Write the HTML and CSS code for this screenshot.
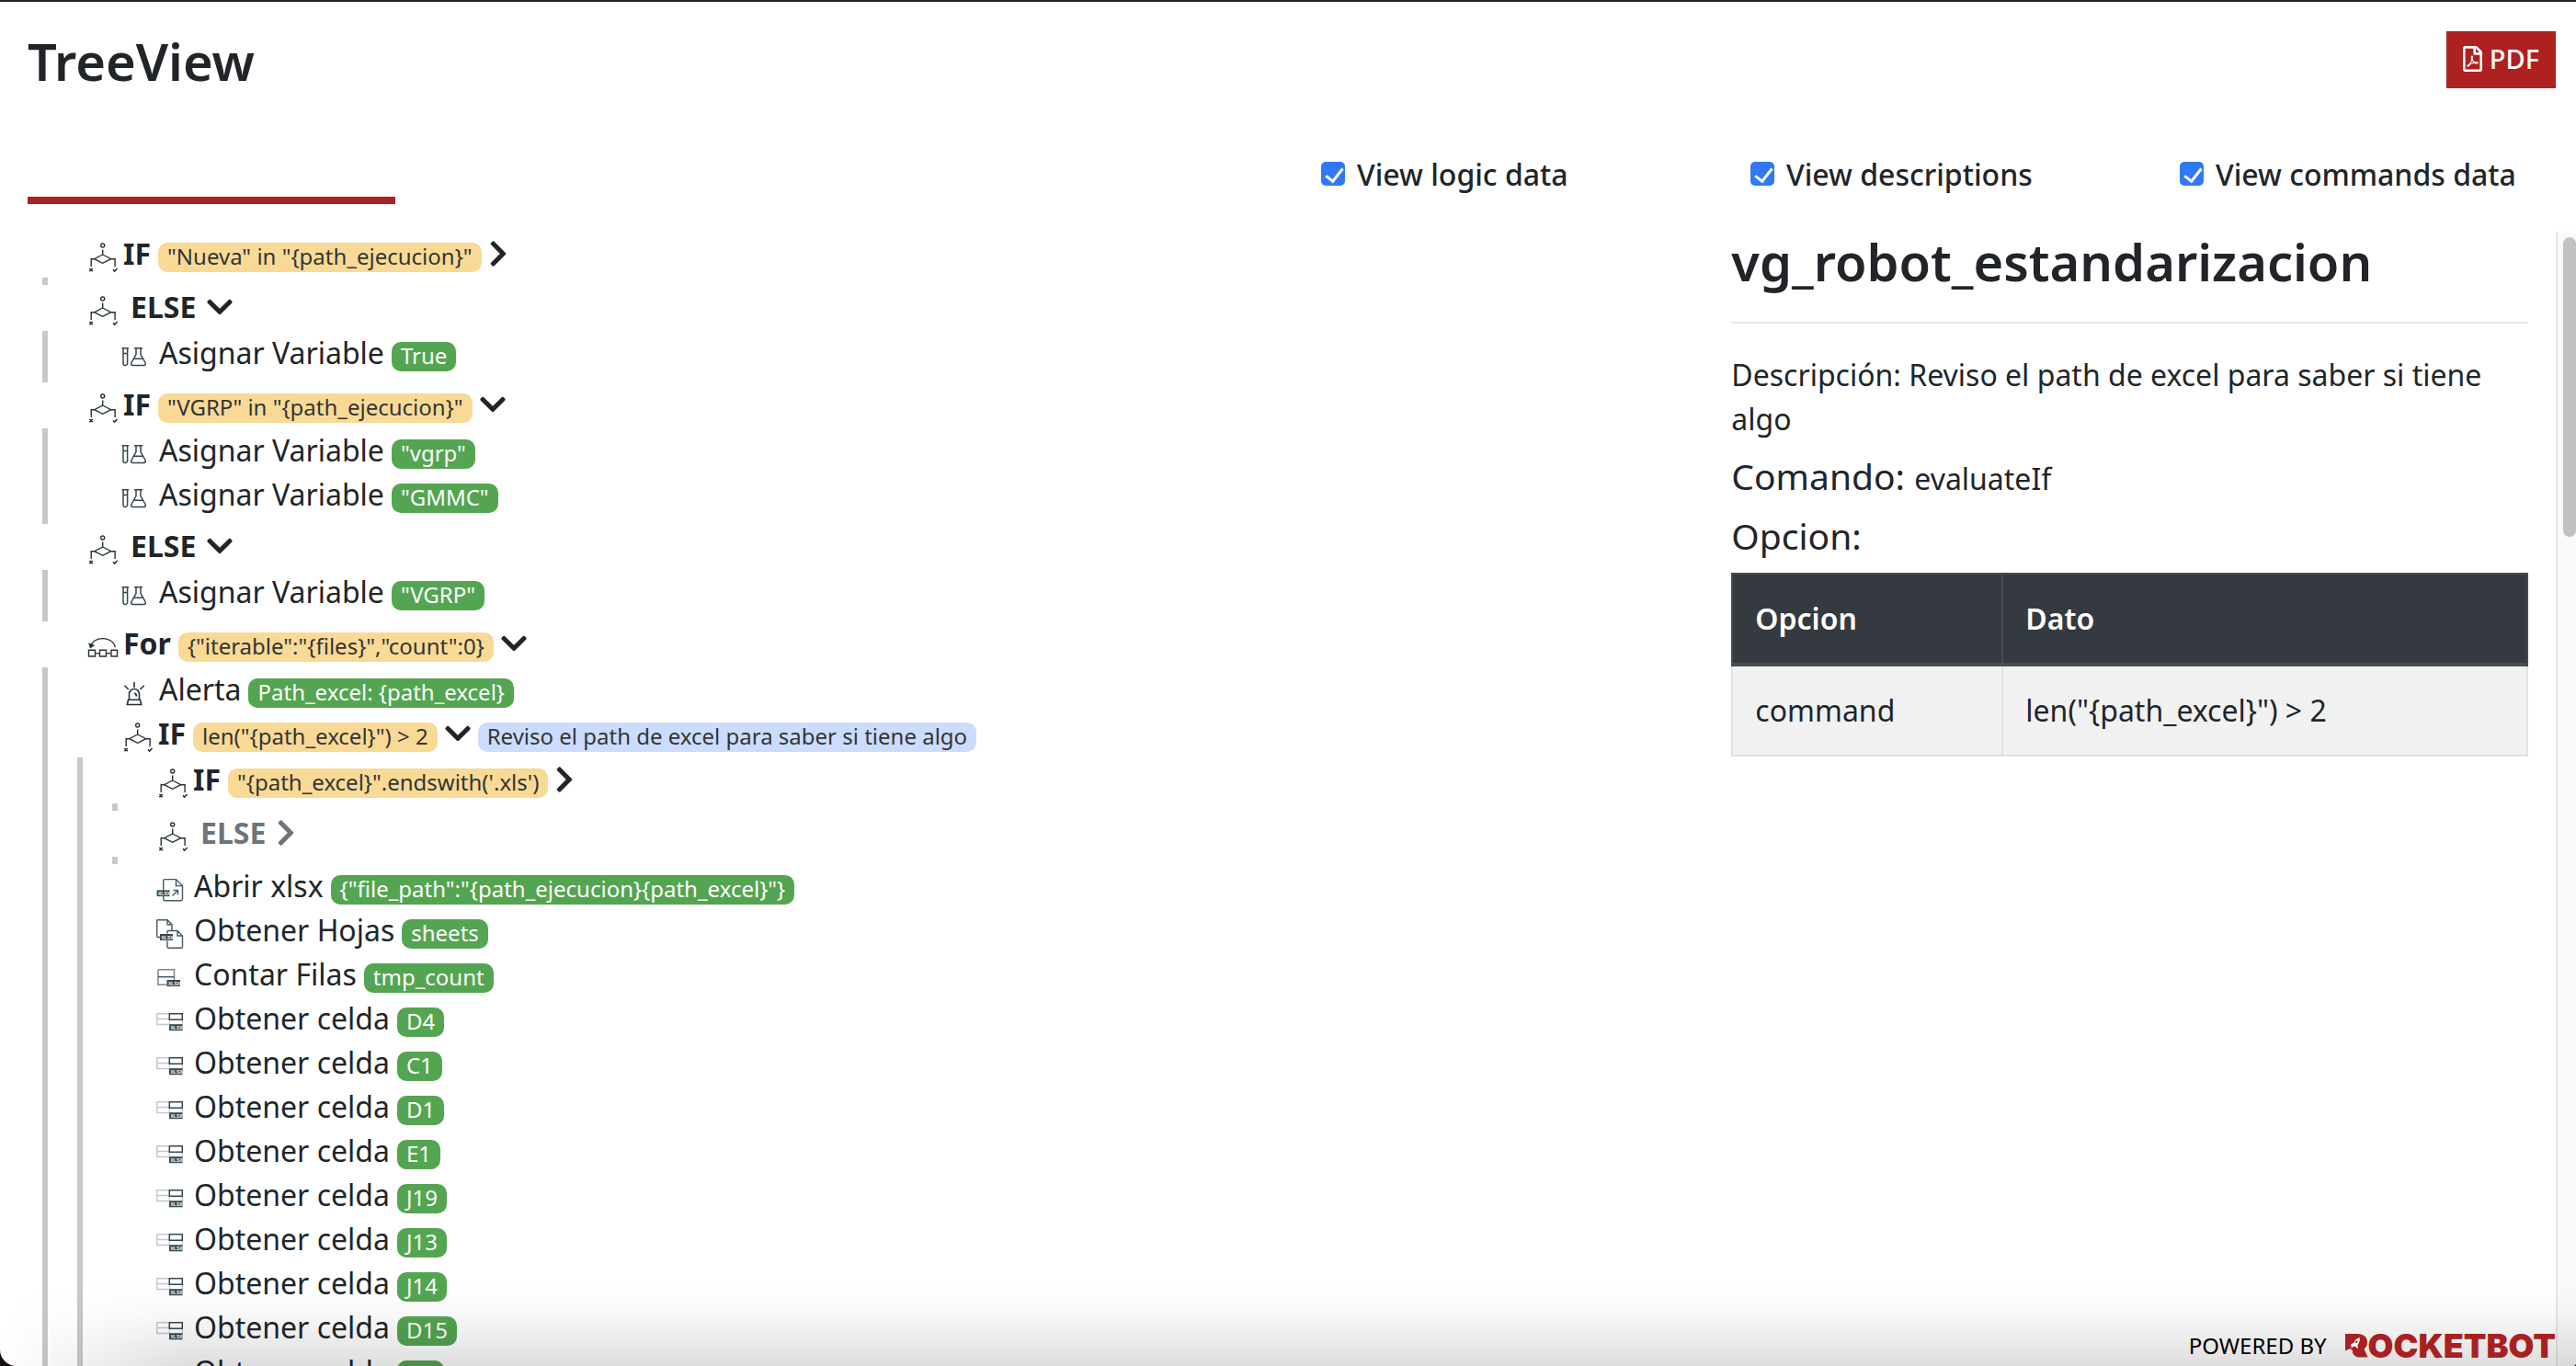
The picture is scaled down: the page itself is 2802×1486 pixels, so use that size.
FILE: index.html
```
<!DOCTYPE html>
<html lang="es">
<head>
<meta charset="utf-8">
<title>TreeView</title>
<link rel="stylesheet" href="styles.css">
</head>
<body>
<svg class="sprite" aria-hidden="true">
  <symbol id="i-branch" viewBox="0 0 36 36">
    <g fill="none" stroke="#263238" stroke-width="1.4">
      <circle cx="17.7" cy="5" r="2"/>
      <path d="M17.7 9.5V15M17.7 15l9 4.7-9 4.6-9-4.6zM8.7 19.7H5.2V28M26.7 19.7h4.4V28"/>
      <path d="M3.4 30l3.4 3.2M6.8 30l-3.4 3.2M29 31.4l1.6 1.6 3-3" stroke-width="1.6"/>
    </g>
  </symbol>
  <symbol id="i-loop" viewBox="0 0 36 36">
    <g fill="none" stroke="#263238" stroke-width="1.4">
      <path d="M4.800 18C6 5.500 29 5.500 31.300 18M2.500 21.200h7v6.800h-7zM14.500 21.200h7v6.800h-7zM27 21.200h6.500v6.800h-6.500zM10.500 24.700h3M22.500 24.700h3.500"/>
      <path d="M3.200 14.500l1.300 3.800 3.200-2.200z" fill="#263238"/>
    </g>
  </symbol>
  <symbol id="i-flask" viewBox="0 0 30 32">
    <g fill="none" stroke="#37474f" stroke-width="1.5">
      <path d="M.6 6.700h7.400M2 6.700v16.500a2.300 2.300 0 0 0 4.600 0V6.700M2 12.500h4.600"/>
      <path d="M14 6.700h9M16 7v6.500l-5 9q-1.200 3 1.800 3h11.400q3 0 1.800-3l-5-9V7M13.600 18.200h9.800"/>
    </g>
  </symbol>
  <symbol id="i-siren" viewBox="0 0 30 32">
    <g fill="none" stroke="#263238" stroke-width="1.6">
      <path d="M8.500 23v-6a5.500 5.500 0 0 1 11 0v6M7.500 23.200h13l1.200 5.300H6.300zM14 4v6M3.500 7.700l4.300 4.300M24.700 7.700L20.400 12"/>
      <path d="M14.200 16.200q2 .3 2.300 3.300" stroke-width="1.8"/>
    </g>
  </symbol>
  <symbol id="i-open" viewBox="0 0 30 32">
    <g fill="none" stroke="#455a64" stroke-width="1.4">
      <path d="M9 4.600h12.500l7 7V26q0 1.700-1.700 1.700H9.200Q7.700 27.700 7.700 26V6q0-1.400 1.300-1.400zM21.500 4.600v7h7M17.500 22.500l6-6M18.500 16.500h5v5"/>
    </g>
    <path fill="#37474f" d="M.6 16.400h14v6.700H.6z"/>
    <text class="tag" x="2" y="22">XLSX</text>
  </symbol>
  <symbol id="i-sheets" viewBox="0 0 30 32">
    <g fill="none" stroke="#455a64" stroke-width="1.4">
      <path d="M4 19.500H1.600Q.7 19.500.7 18V2Q.7.700 1.600.700H12l5 5v6M12 .700v5h5M23 12.500v5.500h5.500M12 15.500v-2q0-1 1-1h10l5.500 5.500v12q0 1.300-1.200 1.300H13.200Q12 31.300 12 30v-6.500"/>
    </g>
    <path fill="#37474f" d="M4 16h14v7H4z"/>
    <text class="tag" x="5.5" y="22">XLSX</text>
  </symbol>
  <symbol id="i-rows" viewBox="0 0 30 32">
    <path fill="none" stroke="#7b868c" stroke-width="1.5" d="M2 6.700h17.500v8M19.500 14.500V18M2 6.700v16.600h9"/>
    <path stroke="#455a64" stroke-width="1.5" d="M2 14.700h17.500"/>
    <path fill="#37474f" d="M11.500 18H26v7H11.500z"/>
    <text class="tag" x="13" y="24">XLSX</text>
  </symbol>
  <symbol id="i-cell" viewBox="0 0 30 32">
    <path fill="none" stroke="#c4c8ca" stroke-width="1.5" d="M14 6.700H.7v11.800H14M.7 12.600H14M28.300 13.500v5"/>
    <path fill="none" stroke="#37474f" stroke-width="1.5" d="M14.300 6.700h14v6.600h-14z"/>
    <path stroke="#c4c8ca" d="M14.300 14v4"/>
    <path fill="#37474f" d="M14 18.200h14.500v7H14z"/>
    <text class="tag" x="15.5" y="24">XLSX</text>
  </symbol>
  <symbol id="i-down" viewBox="0 0 448 512"><path fill="currentColor" d="M207.029 381.476L12.686 187.132c-9.373-9.373-9.373-24.569 0-33.941l22.667-22.667c9.357-9.357 24.522-9.375 33.901-.04L224 284.505l154.745-154.021c9.379-9.335 24.544-9.317 33.901.04l22.667 22.667c9.373 9.373 9.373 24.569 0 33.941L240.971 381.476c-9.373 9.372-24.569 9.372-33.942 0z"/></symbol>
  <symbol id="i-right" viewBox="0 0 320 512"><path fill="currentColor" d="M285.476 272.971L91.132 467.314c-9.373 9.373-24.569 9.373-33.941 0l-22.667-22.667c-9.357-9.357-9.375-24.522-.04-33.901L188.505 256 34.484 101.255c-9.335-9.379-9.317-24.544.04-33.901l22.667-22.667c9.373-9.373 24.569-9.373 33.941 0L285.475 239.030c9.373 9.372 9.373 24.568.001 33.941z"/></symbol>
</svg>

<div class="page">
  <header class="topbar">
    <h1>TreeView</h1>
    <button class="pdf" type="button">
      <svg viewBox="0 0 384 512" aria-hidden="true"><path fill="currentColor" d="M369.900 97.900L286 14C277 5 264.800-.1 252.100-.1H48C21.500 0 0 21.500 0 48v416c0 26.500 21.500 48 48 48h288c26.500 0 48-21.500 48-48V131.900c0-12.700-5.100-25-14.100-34zM332.100 128H256V51.900l76.100 76.100zM48 464V48h160v104c0 13.300 10.700 24 24 24h104v288H48zm250.200-143.700c-12.200-12-47-8.700-64.400-6.500-17.200-10.500-28.700-25-36.800-46.300 3.900-16.100 10.100-40.600 5.400-56-4.200-26.200-37.800-23.600-42.600-5.900-4.400 16.100-.4 38.500 7 67.100-10 23.900-24.900 56-35.400 74.400-20 10.300-47 26.200-51 46.200-3.300 15.800 26 55.200 76.100-31.200 22.400-7.400 46.800-16.500 68.400-20.100 18.900 10.200 41 17 55.800 17 25.500 0 28-28.200 17.500-38.700zm-198.100 77.800c5.100-13.700 24.500-29.500 30.400-35-19 30.300-30.400 35.700-30.400 35zm81.600-190.600c7.400 0 6.700 32.100 1.800 40.800-4.400-13.900-4.300-40.800-1.800-40.800zm-24.400 136.600c9.700-16.900 18-37 24.700-54.700 8.300 15.100 18.900 27.200 30.100 35.500-20.800 4.300-38.900 13.100-54.800 19.200zm131.600-5s-5 6-37.300-7.800c35.100-2.600 40.900 5.400 37.300 7.800z"/></svg>
      PDF
    </button>
  </header>

  <div class="filters">
    <div class="rule"></div>
    <label><input type="checkbox" checked>View logic data</label>
    <label><input type="checkbox" checked>View descriptions</label>
    <label><input type="checkbox" checked>View commands data</label>
  </div>

  <div class="content">
    <main>
      <ul class="tree">
        <li>
          <div class="node"><svg class="icon"><use href="#i-branch"/></svg><b>IF</b><span class="badge logic">"Nueva" in "{path_ejecucion}"</span><button class="toggle" type="button" aria-label="Expandir"><svg class="right"><use href="#i-right"/></svg></button></div>
          <ul></ul>
        </li>
        <li>
          <div class="node"><svg class="icon"><use href="#i-branch"/></svg><b class="else">ELSE</b><button class="toggle" type="button" aria-label="Contraer"><svg class="down"><use href="#i-down"/></svg></button></div>
          <ul>
            <li class="leaf"><svg class="icon"><use href="#i-flask"/></svg><span>Asignar Variable</span><span class="badge data">True</span></li>
          </ul>
        </li>
        <li>
          <div class="node"><svg class="icon"><use href="#i-branch"/></svg><b>IF</b><span class="badge logic">"VGRP" in "{path_ejecucion}"</span><button class="toggle" type="button" aria-label="Contraer"><svg class="down"><use href="#i-down"/></svg></button></div>
          <ul>
            <li class="leaf"><svg class="icon"><use href="#i-flask"/></svg><span>Asignar Variable</span><span class="badge data">"vgrp"</span></li>
            <li class="leaf"><svg class="icon"><use href="#i-flask"/></svg><span>Asignar Variable</span><span class="badge data">"GMMC"</span></li>
          </ul>
        </li>
        <li>
          <div class="node"><svg class="icon"><use href="#i-branch"/></svg><b class="else">ELSE</b><button class="toggle" type="button" aria-label="Contraer"><svg class="down"><use href="#i-down"/></svg></button></div>
          <ul>
            <li class="leaf"><svg class="icon"><use href="#i-flask"/></svg><span>Asignar Variable</span><span class="badge data">"VGRP"</span></li>
          </ul>
        </li>
        <li>
          <div class="node"><svg class="icon"><use href="#i-loop"/></svg><b>For</b><span class="badge logic">{"iterable":"{files}","count":0}</span><button class="toggle" type="button" aria-label="Contraer"><svg class="down"><use href="#i-down"/></svg></button></div>
          <ul>
            <li class="leaf"><svg class="icon"><use href="#i-siren"/></svg><span>Alerta</span><span class="badge data">Path_excel: {path_excel}</span></li>
            <li>
              <div class="node"><svg class="icon"><use href="#i-branch"/></svg><b>IF</b><span class="badge logic">len("{path_excel}") &gt; 2</span><button class="toggle" type="button" aria-label="Contraer"><svg class="down"><use href="#i-down"/></svg></button><span class="badge note">Reviso el path de excel para saber si tiene algo</span></div>
              <ul>
                <li>
                  <div class="node"><svg class="icon"><use href="#i-branch"/></svg><b>IF</b><span class="badge logic">"{path_excel}".endswith('.xls')</span><button class="toggle" type="button" aria-label="Expandir"><svg class="right"><use href="#i-right"/></svg></button></div>
                  <ul></ul>
                </li>
                <li>
                  <div class="node muted"><svg class="icon"><use href="#i-branch"/></svg><b class="else">ELSE</b><button class="toggle" type="button" aria-label="Expandir"><svg class="right"><use href="#i-right"/></svg></button></div>
                  <ul></ul>
                </li>
                <li class="leaf"><svg class="icon"><use href="#i-open"/></svg><span>Abrir xlsx</span><span class="badge data">{"file_path":"{path_ejecucion}{path_excel}"}</span></li>
                <li class="leaf"><svg class="icon"><use href="#i-sheets"/></svg><span>Obtener Hojas</span><span class="badge data">sheets</span></li>
                <li class="leaf"><svg class="icon"><use href="#i-rows"/></svg><span>Contar Filas</span><span class="badge data">tmp_count</span></li>
                <li class="leaf"><svg class="icon"><use href="#i-cell"/></svg><span>Obtener celda</span><span class="badge data">D4</span></li>
                <li class="leaf"><svg class="icon"><use href="#i-cell"/></svg><span>Obtener celda</span><span class="badge data">C1</span></li>
                <li class="leaf"><svg class="icon"><use href="#i-cell"/></svg><span>Obtener celda</span><span class="badge data">D1</span></li>
                <li class="leaf"><svg class="icon"><use href="#i-cell"/></svg><span>Obtener celda</span><span class="badge data">E1</span></li>
                <li class="leaf"><svg class="icon"><use href="#i-cell"/></svg><span>Obtener celda</span><span class="badge data">J19</span></li>
                <li class="leaf"><svg class="icon"><use href="#i-cell"/></svg><span>Obtener celda</span><span class="badge data">J13</span></li>
                <li class="leaf"><svg class="icon"><use href="#i-cell"/></svg><span>Obtener celda</span><span class="badge data">J14</span></li>
                <li class="leaf"><svg class="icon"><use href="#i-cell"/></svg><span>Obtener celda</span><span class="badge data">D15</span></li>
                <li class="leaf"><svg class="icon"><use href="#i-cell"/></svg><span>Obtener celda</span><span class="badge data">D1</span></li>
              </ul>
            </li>
          </ul>
        </li>
      </ul>
    </main>

    <aside>
      <h2>vg_robot_estandarizacion</h2>
      <hr>
      <p>Descripción: Reviso el path de excel para saber si tiene algo</p>
      <h3>Comando: <small>evaluateIf</small></h3>
      <h3>Opcion:</h3>
      <table>
        <thead><tr><th scope="col">Opcion</th><th scope="col">Dato</th></tr></thead>
        <tbody><tr><td>command</td><td>len("{path_excel}") &gt; 2</td></tr></tbody>
      </table>
    </aside>

    <div class="scrollbar"><div class="thumb"></div></div>
  </div>

  <div class="shade"></div>
  <footer>
    <span>POWERED BY</span>
    <span class="logo">
      <svg viewBox="0 0 25 26" aria-hidden="true">
        <path fill="#a82020" d="M0 0H13C20 0 24 3.500 24 9c0 3.500-1.500 6-3.500 7.500L24.500 25.500H14C9.500 24 7.500 21.500 8 18.500L5.500 16 0 18.500z"/>
        <path fill="#fff" d="M15.800 4c.3 3-.4 5.700-2.400 8.200l.5 4.400-2.600-2.700-2.300-.5-2.600 2.800.8-3.400-1.400 1 .6-2.900 2.700-1C10.200 7.200 12.300 5 15.800 4z"/>
        <circle cx="12.200" cy="8.800" r="1.300" fill="#a82020"/>
      </svg>OCKETBOT
    </span>
  </footer>
</div>
</body>
</html>
```
FILE: styles.css
```
* { box-sizing: border-box; }

body {
  margin: 0;
  background: #141014;
  color: #212529;
  font: 450 32px/48px "Noto Sans", sans-serif;
}

h1, h2, h3, p, ul { margin: 0; padding: 0; }
ul { list-style: none; }
svg { display: block; flex: none; }
button { font: inherit; color: inherit; border: 0; background: none; padding: 0; }
.sprite { display: none; }
.tag { font: 700 5px "Liberation Sans", sans-serif; fill: #fff; }

.page {
  position: relative;
  display: flex;
  flex-direction: column;
  height: 100vh;
  overflow: hidden;
  border-top: 2px solid #262324;
  border-radius: 0 0 4px 18px;
  background: #fff;
}

.topbar {
  display: flex;
  justify-content: space-between;
  padding: 32px 22px 68px 30px;
}
h1, h2 { font-size: 56px; font-weight: 600; line-height: 64px; }

.pdf {
  display: flex;
  align-items: center;
  gap: 8px;
  height: 62px;
  padding: 0 18px 2px;
  background: #ad2121;
  color: #fff;
  font-size: 29px;
  font-weight: 500;
}
.pdf svg { width: 21px; height: 28px; }

.filters {
  display: grid;
  grid-template-columns: 3fr 1fr 1fr 1fr;
  height: 56px;
  margin-bottom: 30px;
}
.rule {
  align-self: end;
  width: 400px;
  height: 8px;
  margin-left: 30px;
  background: #ad2121;
}
.filters label {
  display: flex;
  gap: 13px;
  padding-left: 36px;
  font-weight: 500;
  white-space: nowrap;
}
.filters input {
  appearance: none;
  width: 26px;
  height: 26px;
  margin: 10px 0 0;
  border-radius: 5px;
  background: #2f79f6;
}
.filters input:checked::before {
  content: "";
  display: block;
  width: 8px;
  height: 16px;
  margin: 3px 9px;
  border: solid #fff;
  border-width: 0 3px 3px 0;
  transform: rotate(38deg);
}

.content { display: flex; flex: 1; min-height: 0; }
main { flex: 1; overflow: hidden; }

.tree { padding-left: 46px; }
.tree ul {
  padding: 0 0 8px 32px;
  border-left: 6px solid #c8c8c8;
}
.node, .leaf {
  display: flex;
  align-items: baseline;
  height: 48px;
  padding-left: 48px;
  white-space: nowrap;
}
.node { height: 50px; }
.icon {
  align-self: flex-start;
  width: 36px;
  height: 36px;
  margin: 10px 4px 0 0;
}
.leaf .icon { width: 30px; height: 32px; margin: 12px 11px 0 0; }
.else { margin-left: 8px; }
.muted { color: #6c757d; }

.badge {
  margin-left: 8px;
  padding: 3px 10px 5px;
  border-radius: 10px;
  font-size: 24px;
  line-height: 24px;
}
.logic { background: #f8da96; color: #343434; font-weight: 400; }
.data { background: #54a551; color: #fff; font-weight: 450; }
.note { background: #cbdcfe; color: #343434; font-weight: 400; }

.toggle { align-self: flex-start; margin: 8px 0 0 8px; }
.else + .toggle { margin-left: 12px; }
.down { width: 28px; height: 32px; }
.right { width: 20px; height: 32px; }

aside { width: 33%; padding: 0 30px 0 28px; }
hr {
  height: 2px;
  margin: 34px 0 32px;
  border: 0;
  background: #e5e5e5;
}
h3 { margin-top: 14px; font-size: 39px; font-weight: 450; line-height: 48px; }
small { font-size: 32px; }

table {
  width: 100%;
  margin-top: 16px;
  border-collapse: collapse;
  background: #f1f1f1;
  text-align: left;
}
th, td { padding: 24px; border: 2px solid #dee2e6; }
th {
  border-color: #454d55;
  border-bottom-width: 4px;
  background: #343a40;
  color: #fff;
  font-weight: 600;
}
th:first-child { width: 34%; }

.scrollbar {
  width: 22px;
  padding: 6px 0 0 6px;
  border-left: 2px solid #e8e8e8;
  background: #fafafa;
}
.thumb { height: 326px; border-radius: 7px; background: #c1c1c1; }

.shade {
  position: absolute;
  inset: auto 0 0;
  height: 90px;
  background: linear-gradient(transparent, rgba(0,0,0,.03) 40%, rgba(0,0,0,.13));
  mask-image: linear-gradient(to right, transparent, #000 200px);
}

footer {
  position: absolute;
  right: 22px;
  bottom: 0;
  display: flex;
  align-items: center;
  gap: 20px;
  height: 44px;
  color: #000;
  font-size: 24px;
  font-weight: 400;
}
.logo {
  display: flex;
  align-items: center;
  color: #a82020;
  font: 900 36px/44px Inter, sans-serif;
}
.logo svg { width: 25px; height: 26px; }
```
